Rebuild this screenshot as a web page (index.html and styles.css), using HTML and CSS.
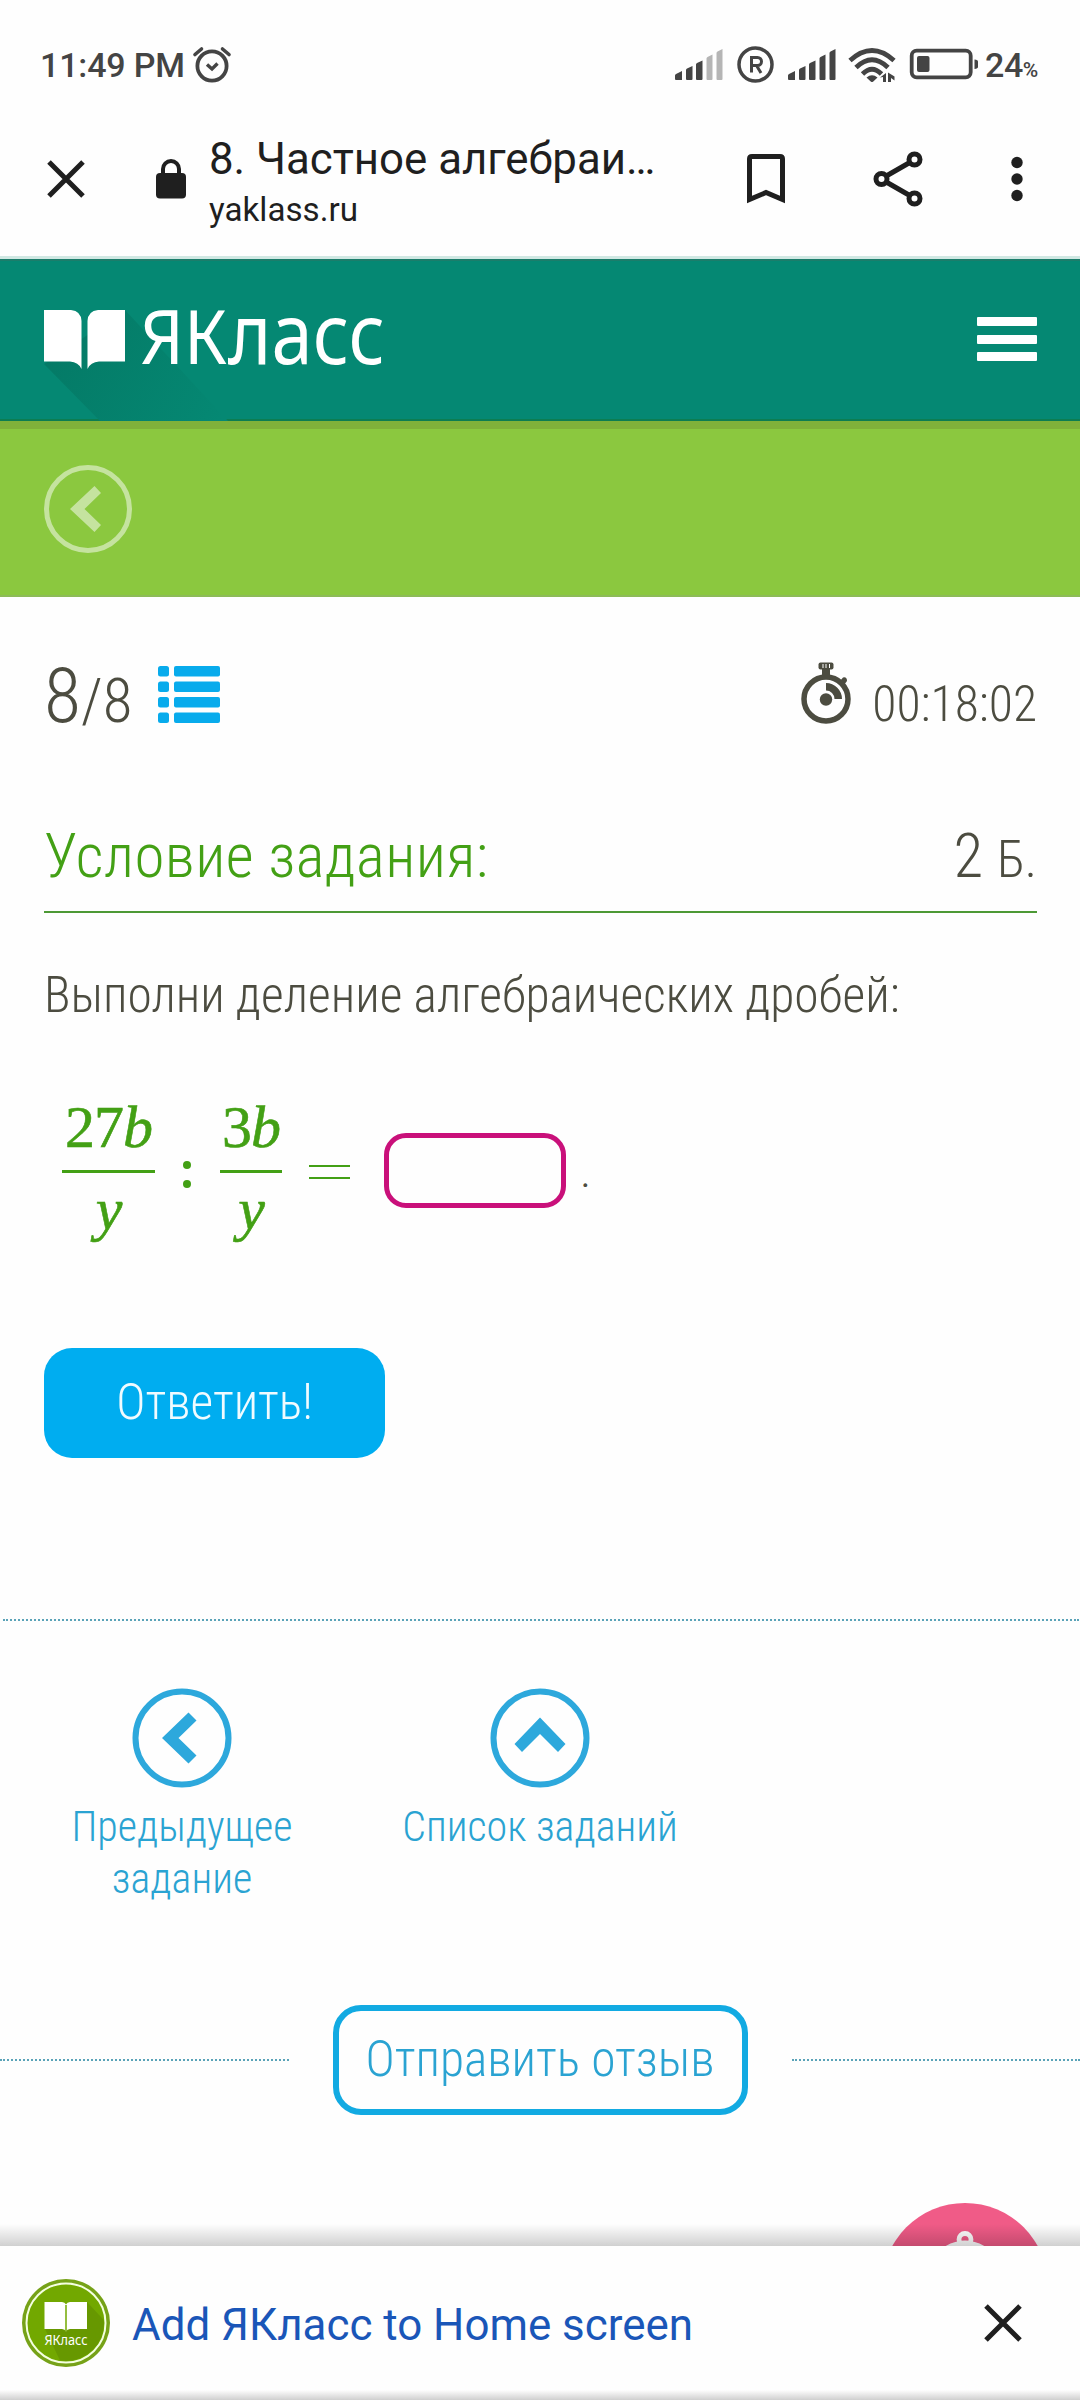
FILE: index.html
```html
<!DOCTYPE html>
<html lang="ru">
<head>
<meta charset="utf-8">
<title>8. Частное алгебраических дробей</title>
<link rel="stylesheet" href="styles.css">
</head>
<body>
<div class="status">
  <span class="clock">11:49 PM</span>
  <svg class="alarm" width="40" height="40" viewBox="0 0 40 40" fill="none" stroke="#444" stroke-linecap="round"><circle cx="20" cy="21" r="14.6" stroke-width="3.8"/><path d="M3 9.500L9.500 4M37 9.500L30.500 4" stroke-width="3.600"/><path d="M15 19.500L20 24L25.500 18.500" stroke-width="3.400" stroke-linecap="butt" /></svg>
  <svg class="icons" width="310" height="40" viewBox="672 45 310 40" fill="#444">
    <path d="M675 75.500q0-1 1-1.500l6-3v9h-6q-1 0-1-1zM686 70q0-1 1-1.500l5.500-2.500v13q0 1-1 1h-4.500q-1 0-1-1zM696 64.500q0-1 1-1.500l5.500-2.500v18.500q0 1-1 1h-4.500q-1 0-1-1z"/>
    <path fill="#b5b5b5" d="M706.500 58.500q0-1 1-1.500l5-2.500v24.500q0 1-1 1h-4q-1 0-1-1zM716.500 53q0-1 1-1.500l5-2.500v30q0 1-1 1h-4q-1 0-1-1z"/>
    <circle cx="755.500" cy="64.500" r="16.500" fill="none" stroke="#444" stroke-width="3.500"/>
    <path d="M751.500 72.500V57.500h6a3.500 3.500 0 0 1 0 8h-6M756.500 65.500l4.500 7.500" fill="none" stroke="#444" stroke-width="3"/>
    <path d="M788 75.500q0-1 1-1.500l6-3v9h-6q-1 0-1-1zM799 70q0-1 1-1.500l5.500-2.500v13q0 1-1 1h-4.500q-1 0-1-1zM809 64.500q0-1 1-1.500l5.500-2.500v18.500q0 1-1 1h-4.500q-1 0-1-1zM819.500 58.500q0-1 1-1.500l5-2.500v24.500q0 1-1 1h-4q-1 0-1-1zM829.500 53q0-1 1-1.500l5-2.500v30q0 1-1 1h-4q-1 0-1-1z"/>
    <g fill="none" stroke="#444" stroke-width="4.800"><path d="M850 60.500Q872 40.500 894 60.500M856 67.500Q872 52 888 67.500M862.500 74Q872 64.500 881.500 74"/></g>
    <path d="M866.500 77.500q5.500-4.500 11 0l-4.500 4.200q-1 .8-2 0z"/>
    <path d="M880 77.500l6-4.500v9h-3v-5zM888 72.500l6.500 4v4l-3.500-2.500v4h-3z"/>
    <rect x="911.700" y="50.700" width="59" height="26.600" rx="5" fill="none" stroke="#444" stroke-width="3.800"/>
    <rect x="917" y="56" width="12.500" height="16" rx="2"/><path d="M974.500 59.500q3.500.5 3.500 2v5.500q0 1.500-3.500 2z"/>
  </svg>
  <span class="pct">24<small>%</small></span>
</div>
<div class="toolbar">
  <svg class="close" width="40" height="40" viewBox="0 0 40 40" stroke="#1f1f1f" stroke-width="5"><path d="M3 3L37 37M37 3L3 37"/></svg>
  <svg class="lock" width="32" height="42" viewBox="0 0 32 42"><rect x="1" y="15" width="30" height="25.500" rx="4" fill="#1f1f1f"/><path d="M8 16V11a8 8 0 0 1 16 0v5" fill="none" stroke="#1f1f1f" stroke-width="4"/></svg>
  <div class="titles"><div class="t1">8. Частное алгебраи…</div><div class="t2">yaklass.ru</div></div>
  <svg class="tools" width="290" height="60" viewBox="740 149 290 60" fill="none" stroke="#1f1f1f" stroke-width="5">
    <path d="M749.500 199.500V159q0-2.500 2.500-2.500h28q2.500 0 2.500 2.500v40.500l-16.500-7z"/>
    <path d="M881 179L915 159.500M881 179L915 198.500"/><g fill="#fff"><circle cx="881.500" cy="179" r="5.500"/><circle cx="914.500" cy="159.500" r="5.500"/><circle cx="914.500" cy="198.500" r="5.500"/></g>
    <g fill="#1f1f1f" stroke="none"><circle cx="1017" cy="162.500" r="5.700"/><circle cx="1017" cy="179" r="5.700"/><circle cx="1017" cy="195.500" r="5.700"/></g>
  </svg>
</div>
<header class="header">
  <svg width="420" height="160" viewBox="0 261 420 160">
    <defs><linearGradient id="sh" x1="60" y1="330" x2="220" y2="421" gradientUnits="userSpaceOnUse"><stop offset="0" stop-color="#047a66"/><stop offset="1" stop-color="#058873"/></linearGradient></defs>
    <path d="M44 364L100 421H228L125 310z" fill="url(#sh)"/>
    <path fill="#fff" d="M44 310H71q10 1 10.500 11v48q-3-7-11.500-7.500H44zM125 310H98q-10 1-10.500 11v48q3-7 11.500-7.500H125z"/>
    <g fill="#fff" font-family="'Noto Sans'" font-weight="450"><text x="140" y="363.500" font-size="75" textLength="87" lengthAdjust="spacingAndGlyphs">ЯК</text><text x="228" y="363.500" font-size="84" textLength="157" lengthAdjust="spacingAndGlyphs">ласс</text></g>
  </svg>
  <div class="menu"><i></i><i></i><i></i></div>
</header>
<div class="crumbs">
  <svg width="88" height="88" viewBox="44 465 88 88"><g opacity=".5"><circle cx="88" cy="509" r="41.500" fill="none" stroke="#fff" stroke-width="5"/><path fill="#fff" d="M70 509L94.500 486L101 493L84.500 509L101 525L94.500 532z"/></g></svg>
</div>
<main>
  <div class="progress">
    <div class="count"><b>8</b><span>/8</span></div>
    <svg class="list" width="62" height="58" viewBox="0 0 62 58" fill="#08abec"><rect width="11" height="10.500" rx="2.500"/><rect x="16" width="46" height="10.500" rx="2"/><rect y="15.500" width="11" height="10.500" rx="2.500"/><rect x="16" y="15.500" width="46" height="10.500" rx="2"/><rect y="31" width="11" height="10.500" rx="2.500"/><rect x="16" y="31" width="46" height="10.500" rx="2"/><rect y="46.500" width="11" height="10.500" rx="2.500"/><rect x="16" y="46.500" width="46" height="10.500" rx="2"/></svg>
    <svg class="watch" width="52" height="64" viewBox="801 661 52 64"><g fill="#4c4c40"><circle cx="827" cy="699" r="22" fill="none" stroke="#4c4c40" stroke-width="5.500"/><path d="M823 669h8v8h-8zM841 681l3-3.500q4-1 4 3.500l-3 4z"/><rect x="819.500" y="662.500" width="15" height="7" rx="2"/><circle cx="827" cy="699.500" r="6.200"/><path d="M827 683a16 16 0 0 1 16 16h-7.500a8.500 8.500 0 0 0-8.500-8.500z"/></g><path d="M824 664v4M827 664v4M830.500 664v4" stroke="#fff" stroke-width="1"/></svg>
    <span class="time">00:18:02</span>
  </div>
  <div class="heading"><h1>Условие задания:</h1><div class="points">2 <small>Б.</small></div></div>
  <p class="task">Выполни деление алгебраических дробей:</p>
  <div class="formula">
    <div class="frac f1"><div class="num">27<em>b</em></div><div class="den"><em>y</em></div></div>
    <div class="colon"><i></i><i></i></div>
    <div class="frac f2"><div class="num">3<em>b</em></div><div class="den"><em>y</em></div></div>
    <div class="equals"></div>
    <input class="answer" type="text" aria-label="Ответ">
    <span class="dot">.</span>
  </div>
  <button class="submit">Ответить!</button>
</main>
<nav class="nav">
  <a><svg width="100" height="100" viewBox="-50 -50 100 100"><circle r="46.500" fill="none" stroke="#2da8dc" stroke-width="6"/><path fill="#2da8dc" d="M-20 0L6.500-25.500L14.500-17.500L-3.500 0L14.500 17.500L6.500 25.500z"/></svg><span>Предыдущее задание</span></a>
  <a><svg width="100" height="100" viewBox="-50 -50 100 100"><circle r="46.500" fill="none" stroke="#2da8dc" stroke-width="6"/><path fill="#2da8dc" d="M0-20.500L25.500 6L18 14L0-4L-18 14L-25.500 6z"/></svg><span>Список заданий</span></a>
</nav>
<div class="feedback"><div class="dots"></div><button>Отправить отзыв</button><div class="dots"></div></div>
<div class="bottom">
  <svg class="bell" width="166" height="44" viewBox="882 2202 166 44"><circle cx="965" cy="2286" r="83" fill="#f05b87"/><path d="M944 2247q21-13 42 0z" fill="#fff"/><circle cx="965" cy="2239.500" r="6" fill="none" stroke="#fff" stroke-width="4.800"/></svg>
</div>
<footer class="install">
  <svg width="90" height="90" viewBox="-45 -45 90 90"><defs><clipPath id="disc"><circle r="38"/></clipPath></defs><circle r="44" fill="#76a218"/><circle r="39.500" fill="#72a800" stroke="#f4ffe0" stroke-width="2"/><path clip-path="url(#disc)" d="M21-21L50 10V50H0L-21 6z" fill="#679800"/><path fill="#fff" d="M-21.500-21H-4q3 0 4 2.500q1-2.500 4-2.500H21V6H4q-3 0-4 2.500q-1-2.500-4-2.500H-21.500z"/><path d="M0-18V8" stroke="#72a800" stroke-width="1.500"/><text x="-21.500" y="21.500" font-size="13.500" font-family="'Noto Sans'" fill="#fff" textLength="43" lengthAdjust="spacingAndGlyphs">ЯКласс</text></svg>
  <span>Add ЯКласс to Home screen</span>
  <svg class="x" width="40" height="40" viewBox="0 0 40 40" stroke="#1f1f1f" stroke-width="5"><path d="M3 3L37 37M37 3L3 37"/></svg>
</footer>
</body>
</html>
```
FILE: styles.css
```css
* { box-sizing: border-box; }
body { margin: 0; width: 1080px; height: 2400px; overflow: hidden; background: #fefefe; font-family: Roboto, sans-serif; color: #4c4c40; display: flex; flex-direction: column; }
svg { display: block; flex: none; }
h1, p { margin: 0; font-weight: 300; }
.status { height: 130px; display: flex; align-items: flex-start; padding: 45px 0 0 40px; color: #444; font-size: 34px; line-height: 41px; font-weight: 500; white-space: nowrap; }
.clock { width: 152px; letter-spacing: -.15px; }
.icons { margin-left: 440px; }
.pct { margin-left: 3px; letter-spacing: -.4px; }
.pct small { font-size: 21px; }
.toolbar { height: 129px; border-bottom: 3px solid #d0e8e3; display: flex; align-items: flex-start; color: #1f1f1f; padding: 0 0 0 46px; white-space: nowrap; }
.close { margin-top: 29px; }
.lock { margin: 28px 0 0 69px; }
.titles { width: 553px; padding: 4px 0 0 22px; }
.t1 { font-size: 43.8px; line-height: 50px; }
.t2 { font-size: 33.2px; line-height: 40px; margin-top: 6px; }
.tools { margin-top: 19px; }
.header { height: 162px; background: #058873; border-top: 2px solid #1c7d6b; border-bottom: 2px solid #0c7d52; display: flex; justify-content: space-between; }
.menu { width: 60px; margin: 56px 43px 0 0; display: flex; flex-direction: column; gap: 8.500px; }
.menu i { height: 9px; border-radius: 1px; background: #fff; }
.crumbs { height: 176px; background: #8bc83f; border-top: 8px solid #80b13a; border-bottom: 2px solid #8dbb58; padding: 36px 44px 0; }
main { height: 1021px; padding: 0 43px 0 44px; font-family: "Roboto Condensed", Roboto, sans-serif; font-stretch: 75%; font-weight: 300; display: flex; flex-direction: column; align-items: flex-start; white-space: nowrap; }
.progress { width: 100%; height: 213px; display: flex; align-items: flex-start; padding-top: 62px; }
.count { width: 114px; line-height: 75px; font-size: 61px; }
.count b { font-size: 76px; font-weight: 300; }
.list { margin-top: 7px; }
.watch { margin: 2px 20px 0 auto; }
.time { font-size: 49.6px; line-height: 60px; margin-top: 15px; }
.heading { width: 100%; height: 103px; border-bottom: 2px solid #4d9935; display: flex; justify-content: space-between; font-size: 61px; line-height: 70px; padding-top: 11px; }
h1 { font-size: 61px; color: #43a015; letter-spacing: .4px; }
.points small { font-size: 51px; }
.task { font-size: 49.5px; line-height: 60px; margin-top: 52px; }
.formula { height: 150px; margin: 76px 0 0 18px; display: flex; align-items: flex-start; color: #43a015; }
.frac { font-family: "Liberation Serif", serif; font-stretch: normal; font-weight: 400; font-size: 60px; line-height: 52px; letter-spacing: -1px; text-align: center; -webkit-text-stroke: .6px; }
.num { height: 72px; border-bottom: 3px solid #43a015; }
.f1 { width: 93px; }
.f2 { width: 62px; }
.den { line-height: 70px; margin-top: 1px; }
.colon { width: 8px; margin: 60px 29px 0 28px; display: flex; flex-direction: column; gap: 11px; }
.colon i { height: 8px; border-radius: 4px; background: #43a015; }
.equals { width: 41px; height: 14px; margin: 64px 34px 0 27px; border: solid #43a015; border-width: 2px 0; }
.answer { width: 182px; height: 75px; margin-top: 32px; border: 5px solid #c9107a; border-radius: 22px; background: none; padding: 0; outline: none; }
.dot { margin: 50px 0 0 15px; font-size: 34px; line-height: 48px; color: #4c4c40; font-weight: 400; }
.submit { width: 341px; height: 110px; margin-top: 97px; border: 0; border-radius: 28px; background: #00adf0; color: #f0fbff; font: inherit; font-size: 49.5px; padding: 0 0 2px; }
.nav { height: 388px; border-top: 2px dotted #5aa3b8; margin: 1px 1px 0 3px; padding: 67px 0 0; display: grid; grid-template-columns: 358px 358px; align-content: start; font-family: "Roboto Condensed", Roboto, sans-serif; font-stretch: 75%; font-weight: 300; font-size: 42px; line-height: 52px; color: #2aa3d2; text-align: center; }
.nav a { display: flex; flex-direction: column; align-items: center; }
.nav span { margin-top: 13px; max-width: 300px; }
.feedback { height: 110px; margin-top: -2px; display: flex; align-items: center; justify-content: space-between; gap: 44px; }
.dots { flex: 1; border-top: 2px dotted #5aa3b8; }
.feedback button { width: 415px; height: 110px; border: 6px solid #12aae2; border-radius: 28px; background: none; padding: 0 0 2px; font: 300 49.5px "Roboto Condensed", Roboto, sans-serif; font-stretch: 75%; color: #2aa3d2; }
.bottom { flex: 1; display: flex; align-items: flex-end; padding-left: 882px; position: relative; }
.bottom::after { content: ""; position: absolute; inset: auto 0 0; height: 22px; background: linear-gradient(transparent, rgba(0, 0, 0, .18)); }
.install { height: 154px; background: linear-gradient(#fefefe calc(100% - 10px), #cfcfcf); display: flex; align-items: center; padding-left: 21px; font-size: 43.9px; color: #1a56b8; white-space: nowrap; }
.install span { width: 872px; padding: 3px 0 0 21px; }
```
